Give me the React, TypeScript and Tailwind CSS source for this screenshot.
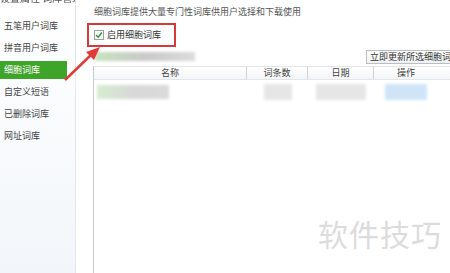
import React from "react";

const font = { fontFamily: '"Noto Sans CJK SC", "Noto Sans", sans-serif' };

export default function App() {
  const items = ["五笔用户词库", "拼音用户词库", "细胞词库", "自定义短语", "已删除词库", "网址词库"];
  return (
    <div className="relative w-[450px] h-[273px] overflow-hidden bg-white flex text-[9px] text-[#333]" style={font}>
      {/* sidebar */}
      <div className="w-[76px] shrink-0 h-full bg-gradient-to-b from-[#ffffff] to-[#f2f6fa] border-r border-[#e3e7eb] flex flex-col">
        <div className="h-[15px] relative overflow-hidden">
          <div className="absolute -top-[10px] left-[0px] whitespace-nowrap text-[10px] text-[#555] blur-[0.3px]">设置属性 词库管理</div>
        </div>
        {items.map((t) => (
          <div
            key={t}
            className={
              t === "细胞词库"
                ? "h-[18px] w-[67px] my-[2px] flex items-center pl-[4px] bg-[#3fa52a] text-white"
                : "h-[18px] my-[2px] flex items-center pl-[4px] text-[#444]"
            }
          >
            {t}
          </div>
        ))}
      </div>
      {/* main */}
      <div className="flex-1 flex flex-col pl-[17px] min-w-0">
        <div className="h-[23px] flex items-center text-[#555] pl-[1px]">细胞词库提供大量专门性词库供用户选择和下载使用</div>
        <div className="flex -ml-[6px]">
          <div className="w-[89px] h-[24px] border-2 border-[#d6393a] flex items-center pl-[5px] gap-[3px]">
            <div className="w-[10px] h-[10px] border border-[#9aa0a6] bg-white flex items-center justify-center">
              <svg width="8" height="8" viewBox="0 0 8 8">
                <path d="M1 4 L3.2 6.2 L7 1.5" stroke="#2e9a2e" strokeWidth="1.5" fill="none" />
              </svg>
            </div>
            <span className="text-[#333]">启用细胞词库</span>
          </div>
        </div>
        <div className="flex items-center justify-between h-[17px] mt-[1px]">
          <div className="h-[9px] w-[100px] ml-[2px] bg-gradient-to-r from-[#c5e3bd] via-[#c9c9c9] to-[#dcdcdc] blur-[1.5px]" />
          <div className="h-[14px] px-[3px] border border-[#b9bec3] bg-gradient-to-b from-white to-[#eef0f2] flex items-center whitespace-nowrap text-[#333] -mr-[14px]">
            立即更新所选细胞词库
          </div>
        </div>
        <div className="flex-1 flex flex-col border-l border-[#c9cdd1] mt-[1px]">
          <div className="flex h-[14px] border-t border-[#d4d8dc] bg-gradient-to-b from-white to-[#f3f5f7] border-b border-[#e3e6e9] text-[#444]">
            <div className="w-[153px] flex items-center justify-center border-r border-[#cfd3d6]">名称</div>
            <div className="w-[61px] flex items-center justify-center border-r border-[#cfd3d6]">词条数</div>
            <div className="w-[66px] flex items-center justify-center border-r border-[#cfd3d6]">日期</div>
            <div className="flex-1 flex items-center justify-center pr-[12px]">操作</div>
          </div>
          <div className="flex h-[18px] mt-[3px] items-center">
            <div className="w-[153px] flex items-center">
              <div className="h-[14px] w-[72px] ml-[3px] bg-gradient-to-r from-[#d6ecd0] via-[#d8d8d8] to-[#dadada] blur-[1.5px]" />
            </div>
            <div className="w-[61px] flex justify-center">
              <div className="h-[16px] w-[28px] bg-[#e6e6e6] blur-[1.5px]" />
            </div>
            <div className="w-[66px] flex justify-center">
              <div className="h-[16px] w-[50px] bg-[#e6e6e6] blur-[1.5px]" />
            </div>
            <div className="flex-1 flex justify-center pr-[12px]">
              <div className="h-[16px] w-[42px] bg-[#cfe5f7] blur-[1.5px]" />
            </div>
          </div>
        </div>
      </div>
      {/* arrow */}
      <svg className="absolute left-0 top-0 pointer-events-none" width="450" height="273">
        <line x1="65" y1="80" x2="92" y2="54" stroke="#e03a3a" strokeWidth="2.5" />
        <polygon points="100,47 86,52 94,60" fill="#e03a3a" />
      </svg>
      {/* watermark */}
      <div className="absolute left-[318px] top-[218px] text-[30px] tracking-[1px] text-[#dcdcdc] whitespace-nowrap leading-none">软件技巧</div>
    </div>
  );
}
